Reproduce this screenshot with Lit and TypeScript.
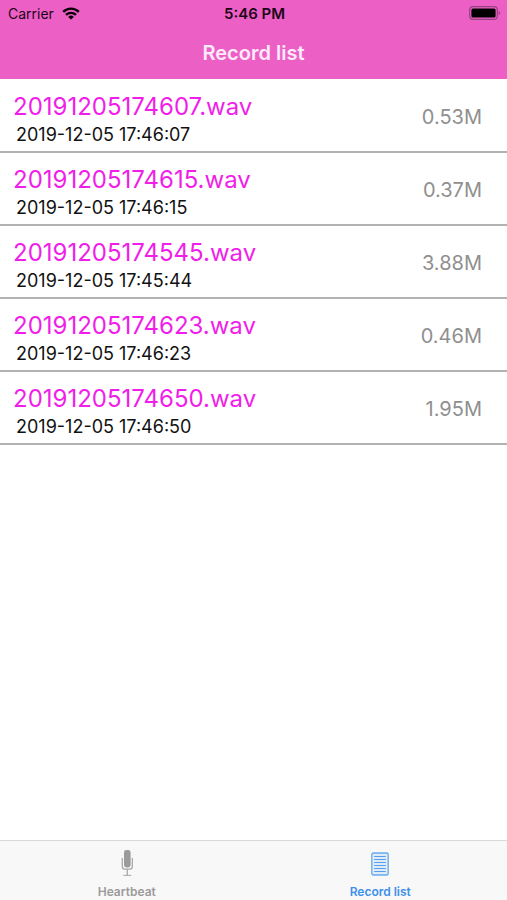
import { LitElement, html, css } from "lit";
import { customElement, property, state } from "lit/decorators.js";
import { classMap } from "lit/directives/class-map.js";

interface Recording {
  name: string;
  date: string;
  size: string;
}

const RECORDINGS: Recording[] = [
  { name: "20191205174607.wav", date: "2019-12-05 17:46:07", size: "0.53M" },
  { name: "20191205174615.wav", date: "2019-12-05 17:46:15", size: "0.37M" },
  { name: "20191205174545.wav", date: "2019-12-05 17:45:44", size: "3.88M" },
  { name: "20191205174623.wav", date: "2019-12-05 17:46:23", size: "0.46M" },
  { name: "20191205174650.wav", date: "2019-12-05 17:46:50", size: "1.95M" },
];

@customElement("status-bar")
export class StatusBar extends LitElement {
  static styles = css`
    :host {
      display: grid;
      grid-template-columns: 1fr auto 1fr;
      align-items: center;
      height: 26px;
      padding: 0 6px 0 8px;
      font-size: 14px;
      color: #1c0616;
    }
    .carrier {
      display: flex;
      align-items: center;
      gap: 8px;
    }
    .time {
      font-size: 15px;
      font-weight: 600;
    }
    .battery {
      justify-self: end;
    }
    svg {
      display: block;
    }
  `;

  render() {
    return html`
      <div class="carrier">
        <span>Carrier</span>
        <svg width="18" height="13" viewBox="0 0 18 13" fill="none" stroke="#0b0208" stroke-width="2.4" aria-hidden="true">
          <path d="M1.2 4.9a11 11 0 0 1 15.6 0" />
          <path d="M4 7.9a7.1 7.1 0 0 1 10 0" />
          <path d="M9 12.6 6.2 9.9a4 4 0 0 1 5.6 0z" fill="#0b0208" stroke="none" />
        </svg>
      </div>
      <span class="time">5:46 PM</span>
      <svg class="battery" width="32" height="14" viewBox="0 0 32 14" aria-hidden="true">
        <rect x="0.7" y="0.7" width="27.6" height="12.6" rx="3.4" fill="none" stroke="#98417f" stroke-width="1.2" />
        <rect x="2.4" y="2.4" width="24.2" height="9.2" rx="1.6" fill="#000" />
        <path d="M29.7 4.8c1.8.7 1.8 3.7 0 4.4z" fill="#98417f" />
      </svg>
    `;
  }
}

@customElement("record-row")
export class RecordRow extends LitElement {
  @property({ attribute: false }) record!: Recording;

  static styles = css`
    :host {
      display: flex;
      align-items: center;
      justify-content: space-between;
      box-sizing: border-box;
      height: 100%;
      padding: 2px 25px 0 13px;
    }
    .file {
      padding-top: 6px;
    }
    .name {
      font-size: 24px;
      line-height: 30px;
      color: #f01ee8;
    }
    .date {
      padding-left: 3px;
      font-size: 18px;
      line-height: 26px;
      color: #111;
    }
    .size {
      font-size: 20px;
      line-height: 28px;
      color: #8f8f8f;
    }
  `;

  render() {
    return html`
      <div class="file">
        <div class="name">${this.record.name}</div>
        <div class="date">${this.record.date}</div>
      </div>
      <div class="size">${this.record.size}</div>
    `;
  }
}

@customElement("app-root")
export class AppRoot extends LitElement {
  @state() private tab = "records";

  static styles = css`
    :host {
      display: flex;
      flex-direction: column;
      min-height: 100vh;
      background: #fff;
      font-family: Inter, "Liberation Sans", sans-serif;
    }
    header {
      background: #ec60c6;
    }
    h1 {
      margin: 0;
      padding-bottom: 12px;
      font-size: 20px;
      font-weight: 600;
      line-height: 28px;
      padding-top: 13px;
      text-align: center;
      color: #fdeafa;
    }
    ul {
      flex: 1;
      margin: 0;
      padding: 1px 0 0;
      list-style: none;
    }
    li {
      box-sizing: border-box;
      height: 73px;
      border-bottom: 2px solid #b2b2b2;
    }
    nav {
      display: grid;
      grid-template-columns: 1fr 1fr;
      border-top: 1px solid #d9d9d9;
      background: #f8f8f8;
    }
    button {
      display: flex;
      flex-direction: column;
      align-items: center;
      gap: 5px;
      padding: 8px 0 0;
      height: 59px;
      border: 0;
      background: none;
      font: inherit;
      font-size: 12px;
      font-weight: 600;
      line-height: 16px;
      color: #9b9b9b;
      cursor: pointer;
    }
    .active {
      color: #3b90ec;
    }
  `;

  private tabButton(id: string, label: string, icon: unknown) {
    const active = this.tab === id;
    return html`
      <button
        class=${classMap({ active })}
        aria-current=${active ? "page" : "false"}
        @click=${() => (this.tab = id)}
      >
        ${icon}<span>${label}</span>
      </button>
    `;
  }

  render() {
    const mic = html`
      <svg width="28" height="30" viewBox="0 0 28 30" fill="none" stroke="currentColor" aria-hidden="true">
        <rect x="11" y="1" width="6.6" height="17.4" rx="2.4" fill="currentColor" stroke="none" />
        <path d="M9.3 9v8.4c0 1.8 1 2.8 2.6 2.8h4.8c1.6 0 2.6-1 2.6-2.8V9" stroke-width="1.3" opacity="0.85" />
        <path d="M14.3 20.2v6" stroke-width="1.4" opacity="0.8" />
        <path d="M10.3 26.4h8" stroke-width="1.1" opacity="0.8" />
      </svg>
    `;
    const page = html`
      <svg width="28" height="30" viewBox="0 0 28 30" fill="none" stroke="currentColor" aria-hidden="true">
        <rect x="5.8" y="4" width="16.4" height="22" rx="1.6" fill="currentColor" fill-opacity="0.12" stroke-width="1.3" stroke-opacity="0.75" />
        <path d="M8.2 7.5h11.6M8.2 10.5h11.6M8.2 13.5h11.6M8.2 16.5h11.6M8.2 19.5h11.6M8.2 22.5h11.6" stroke-width="1" opacity="0.85" />
      </svg>
    `;
    return html`
      <header>
        <status-bar></status-bar>
        <h1>Record list</h1>
      </header>
      <ul>
        ${RECORDINGS.map((record) => html`<li><record-row .record=${record}></record-row></li>`)}
      </ul>
      <nav>
        ${this.tabButton("heartbeat", "Heartbeat", mic)}
        ${this.tabButton("records", "Record list", page)}
      </nav>
    `;
  }
}
